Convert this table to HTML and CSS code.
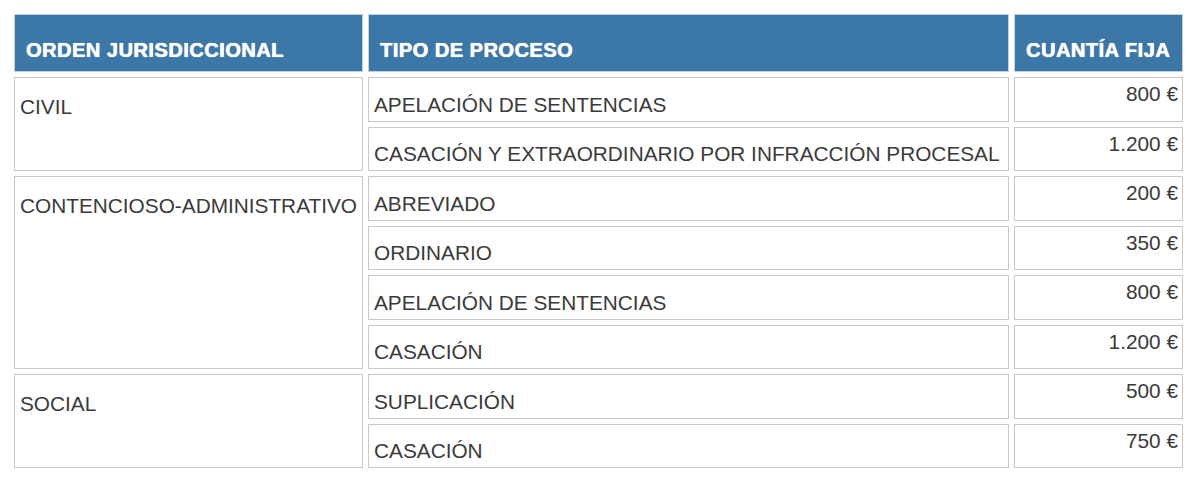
FILE: index.html
```html
<!DOCTYPE html>
<html lang="es">
<head>
<meta charset="utf-8">
<link rel="stylesheet" href="styles.css">
</head>
<body>
<table class="tasas">
  <colgroup>
    <col class="c-orden">
    <col class="c-tipo">
    <col class="c-cuantia">
  </colgroup>
  <thead>
    <tr>
      <th>ORDEN JURISDICCIONAL</th>
      <th>TIPO DE PROCESO</th>
      <th>CUANTÍA FIJA</th>
    </tr>
  </thead>
  <tbody>
    <tr>
      <td class="orden" rowspan="2">CIVIL</td>
      <td class="tipo">APELACIÓN DE SENTENCIAS</td>
      <td class="importe">800 €</td>
    </tr>
    <tr>
      <td class="tipo">CASACIÓN Y EXTRAORDINARIO POR INFRACCIÓN PROCESAL</td>
      <td class="importe">1.200 €</td>
    </tr>
    <tr>
      <td class="orden" rowspan="4">CONTENCIOSO-ADMINISTRATIVO</td>
      <td class="tipo">ABREVIADO</td>
      <td class="importe">200 €</td>
    </tr>
    <tr>
      <td class="tipo">ORDINARIO</td>
      <td class="importe">350 €</td>
    </tr>
    <tr>
      <td class="tipo">APELACIÓN DE SENTENCIAS</td>
      <td class="importe">800 €</td>
    </tr>
    <tr>
      <td class="tipo">CASACIÓN</td>
      <td class="importe">1.200 €</td>
    </tr>
    <tr>
      <td class="orden" rowspan="2">SOCIAL</td>
      <td class="tipo">SUPLICACIÓN</td>
      <td class="importe">500 €</td>
    </tr>
    <tr>
      <td class="tipo">CASACIÓN</td>
      <td class="importe">750 €</td>
    </tr>
  </tbody>
</table>
</body>
</html>
```

FILE: styles.css
```css
html, body {
  margin: 0;
  padding: 0;
  background: #ffffff;
}

body {
  font-family: "Liberation Sans", Arial, Helvetica, sans-serif;
  color: #3a3a3a;
}

.tasas {
  margin: 9px 0 0 9px;
  border-collapse: separate;
  border-spacing: 5px;
  table-layout: fixed;
  width: 1179px;
}

.c-orden { width: 349px; }
.c-tipo { width: 641px; }
.c-cuantia { width: 169px; }

.tasas th {
  box-sizing: border-box;
  height: 58px;
  background: #3b77a7;
  border: 1px solid #c3d2df;
  color: #ffffff;
  font-size: 20px;
  font-weight: bold;
  text-align: left;
  vertical-align: bottom;
  padding: 0 4px 9px 11px;
  line-height: 24px;
  letter-spacing: 0.5px;
  text-shadow: 0 0 1px rgba(255, 255, 255, 0.8), 0.3px 0 0 #ffffff;
  white-space: nowrap;
}

.tasas td {
  box-sizing: border-box;
  height: 44.5px;
  border: 1px solid #c9c9c9;
  font-size: 20.8px;
  line-height: 24px;
  white-space: nowrap;
}

.tasas td.orden {
  vertical-align: top;
  padding: 17px 4px 0 5px;
}

.tasas td.tipo {
  vertical-align: bottom;
  padding: 0 4px 4px 5px;
}

.tasas td.importe {
  vertical-align: top;
  text-align: right;
  padding: 4px 4px 0 4px;
}
```
